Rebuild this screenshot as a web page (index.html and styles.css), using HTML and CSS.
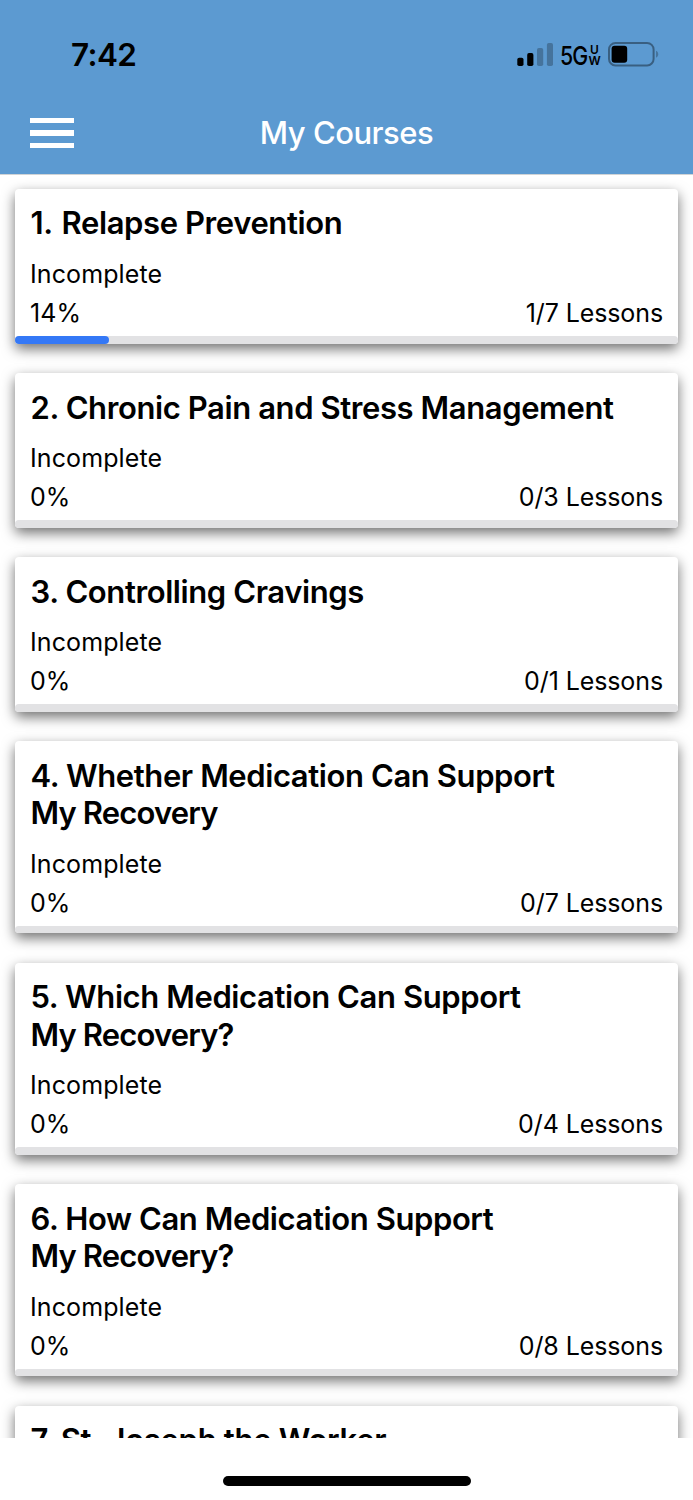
FILE: index.html
```html
<!DOCTYPE html>
<html lang="en">
<head>
<meta charset="utf-8">
<title>My Courses</title>
<link rel="stylesheet" href="styles.css">
</head>
<body>
<div class="screen">
  <header class="header">
    <div class="status">
      <span class="time">7:42</span>
      <div class="indicators">
        <svg class="signal" width="36" height="24" viewBox="0 0 36 24">
          <rect x="0.3" y="14.7" width="6.2" height="8.3" rx="1.8"/>
          <rect x="10.2" y="10.1" width="6.2" height="12.9" rx="1.8"/>
          <rect class="dim" x="20" y="5" width="6.2" height="18" rx="1.8"/>
          <rect class="dim" x="29.9" y="0" width="6.1" height="23" rx="1.8"/>
        </svg>
        <span class="network">5G</span>
        <span class="band"><span>U</span><span>W</span></span>
        <svg class="battery" width="51" height="25" viewBox="0 0 51 25">
          <rect class="shell" x="1" y="1" width="44.6" height="22.4" rx="6.5"/>
          <path class="dim" d="M48 8.8c1.4.5 2.2 1.8 2.2 3.4s-.8 2.9-2.2 3.4z"/>
          <rect x="3.6" y="3.7" width="15.6" height="17" rx="3"/>
        </svg>
      </div>
    </div>
    <nav class="nav">
      <div class="menu"><i></i><i></i><i></i></div>
      <h1 class="page-title">My Courses</h1>
    </nav>
  </header>
  <main class="list">
    <section class="card">
      <h2 class="title"><span class="number">1.</span> Relapse Prevention</h2>
      <p class="row">Incomplete</p>
      <p class="row"><span>14%</span><span class="lessons">1/7 Lessons</span></p>
      <div class="track"><div class="fill" style="width:14.2%"></div></div>
    </section>
    <section class="card">
      <h2 class="title">2. Chronic Pain and Stress Management</h2>
      <p class="row">Incomplete</p>
      <p class="row"><span>0%</span><span class="lessons">0/3 Lessons</span></p>
      <div class="track"></div>
    </section>
    <section class="card">
      <h2 class="title">3. Controlling Cravings</h2>
      <p class="row">Incomplete</p>
      <p class="row"><span>0%</span><span class="lessons">0/1 Lessons</span></p>
      <div class="track"></div>
    </section>
    <section class="card">
      <h2 class="title">4. Whether Medication Can Support<br><span class="tight">My Recovery</span></h2>
      <p class="row">Incomplete</p>
      <p class="row"><span>0%</span><span class="lessons">0/7 Lessons</span></p>
      <div class="track"></div>
    </section>
    <section class="card">
      <h2 class="title">5. Which Medication Can Support<br><span class="tight">My Recovery?</span></h2>
      <p class="row">Incomplete</p>
      <p class="row"><span>0%</span><span class="lessons">0/4 Lessons</span></p>
      <div class="track"></div>
    </section>
    <section class="card">
      <h2 class="title">6. How Can Medication Support<br><span class="tight">My Recovery?</span></h2>
      <p class="row">Incomplete</p>
      <p class="row"><span>0%</span><span class="lessons">0/8 Lessons</span></p>
      <div class="track"></div>
    </section>
    <section class="card">
      <h2 class="title last">7. St. Joseph the Worker</h2>
    </section>
  </main>
  <footer class="footer"><div class="home"></div></footer>
</div>
</body>
</html>
```

FILE: styles.css
```css
* { box-sizing: border-box; }
body { margin: 0; background: #fff; font-family: Inter, "Liberation Sans", sans-serif; color: #000; }
.screen { height: 1500px; display: flex; flex-direction: column; overflow: hidden; }
.header { height: 175px; flex: none; background: #5c9ad1; border-bottom: 1px solid #cfd3d6; }
.status { height: 94px; padding: 14px 34px 0 71px; display: flex; align-items: center; justify-content: space-between; }
.time { font-size: 31.5px; font-weight: 600; letter-spacing: -.6px; }
.indicators { display: flex; align-items: center; padding-top: 1px; }
.dim { fill: #000; opacity: .25; }
.signal { margin-right: 7px; }
.network { font-size: 26px; line-height: 26px; font-weight: 500; width: 29px; letter-spacing: -1px; transform: scaleX(.82); transform-origin: left; margin-top: 2px; }
.band { display: flex; flex-direction: column; align-items: center; width: 11px; font-size: 12px; line-height: 11px; font-weight: 600; margin: 0 8px 0 0; }
.shell { fill: none; stroke: #000; stroke-opacity: .38; stroke-width: 2; }
.nav { height: 78px; padding: 0 30px; display: grid; grid-template-columns: 44px 1fr 44px; align-items: center; }
.menu { display: flex; flex-direction: column; gap: 7px; }
.menu i { height: 5.4px; background: #fff; }
.page-title { margin: 0; text-align: center; color: #fff; font-size: 31px; font-weight: 500; line-height: 38px; letter-spacing: -.5px; }
.list { height: 1263px; flex: none; overflow: hidden; padding: 13.8px 15px 0; display: flex; flex-direction: column; gap: 29.5px; }
.card { flex: none; padding-top: 15.5px; border-radius: 4px; background: #fff; box-shadow: 0 5px 13px rgba(0,0,0,.56); }
.title { margin: 0 15.5px 13.5px; font-size: 31px; line-height: 37.2px; font-weight: 600; white-space: nowrap; letter-spacing: -.4px; }
.title.last { letter-spacing: -.3px; }
.number { margin-right: 1.5px; }
.tight { letter-spacing: -.85px; }
.row { margin: 0 15px; display: flex; justify-content: space-between; font-size: 25px; line-height: 38.9px; letter-spacing: .1px; }
.lessons { letter-spacing: -.1px; }
.track { height: 7.5px; margin-top: 3.2px; border-radius: 4px; background: #e2e2e4; }
.fill { height: 100%; border-radius: 4px; background: #3478f6; }
.footer { flex: 1; background: #fff; display: flex; justify-content: center; padding-top: 38px; }
.home { width: 248px; height: 10px; border-radius: 5px; background: #000; }
```
